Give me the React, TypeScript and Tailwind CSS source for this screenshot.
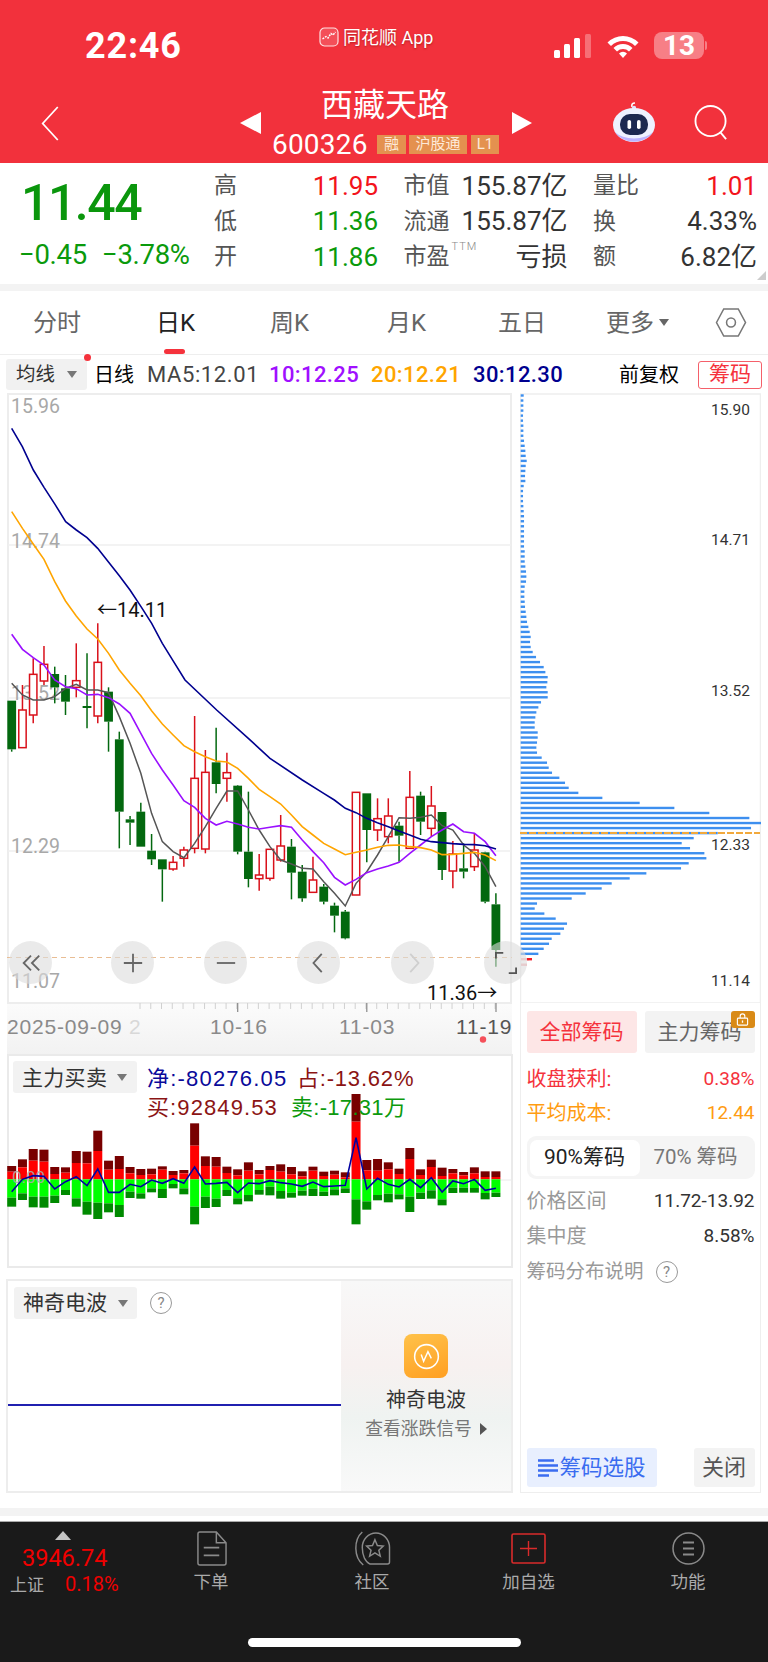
import React from "react";

// Horizontal slot of each trading day shared by the candle, MA and money-flow plots.
const slotX = (i: number) => 11.7 + i * 10.76;
const py = (v: number) => 680 + v / 3;

// [open-close top, open-close bottom, high, low, rising]
const candles: [number, number, number, number, boolean][] = [
  [62, 208, 62, 215, false], [90, 203, 15, 203, true], [-17, 105, -65, 130, true], [-47, 3, -102, 15, true],
  [-18, 22, -40, 70, false], [25, 65, -15, 105, false], [2, 22, -110, 52, true], [78, 84, -80, 145, false],
  [-53, 108, -170, 130, true], [35, 125, 22, 215, false], [178, 395, 155, 505, false], [418, 428, 408, 495, false],
  [395, 500, 368, 500, false], [512, 538, 462, 555, false], [538, 568, 538, 665, false], [547, 567, 528, 572, true],
  [510, 535, 500, 560, true], [295, 505, 108, 520, true], [277, 507, 210, 520, true], [247, 312, 143, 340, false],
  [278, 295, 218, 365, true], [317, 515, 315, 523, false], [515, 597, 335, 622, false], [585, 596, 522, 632, true],
  [508, 595, 508, 602, true], [498, 540, 405, 545, true], [500, 578, 477, 658, false], [575, 655, 555, 665, false],
  [600, 637, 530, 637, true], [620, 665, 612, 673, false], [677, 707, 668, 757, false], [695, 775, 690, 778, false],
  [337, 645, 337, 645, true], [340, 450, 340, 547, false], [416, 450, 355, 483, true], [408, 470, 355, 490, true],
  [437, 467, 425, 545, false], [352, 505, 273, 505, true], [347, 425, 335, 465, false], [378, 445, 318, 470, true],
  [396, 570, 396, 600, false], [522, 573, 483, 625, true], [565, 575, 490, 595, false], [510, 560, 460, 573, true],
  [517, 665, 515, 670, false], [673, 810, 640, 860, false],
];

const ma5 = [10, 45, 60, 60, 50, 25, 13, 30, 30, 38, 110, 190, 280, 400, 485, 515, 533, 490, 440, 385, 333, 333, 390, 450, 500, 540, 552, 565, 567, 605, 640, 678, 610, 575, 525, 470, 413, 415, 412, 405, 437, 450, 495, 520, 560, 620];
const ma10 = [-137, -92, -67, -45, 0, 20, 26, 45, 43, 53, 72, 100, 160, 220, 270, 315, 362, 382, 415, 435, 424, 432, 442, 447, 442, 437, 442, 480, 515, 548, 592, 615, 598, 578, 567, 558, 547, 520, 495, 470, 450, 432, 455, 460, 485, 527];
const ma20 = [-505, -455, -408, -362, -295, -237, -192, -153, -123, -80, -30, 10, 47, 92, 132, 165, 197, 215, 230, 243, 246, 265, 295, 328, 350, 372, 405, 440, 465, 490, 507, 524, 517, 510, 502, 496, 495, 500, 503, 510, 524, 523, 520, 517, 525, 542];
const ma30: [number, number][] = [
  [35, -755], [67, -700], [100, -630], [132, -578], [165, -527], [197, -475], [229, -450], [261, -427], [293, -395],
  [326, -353], [358, -313], [390, -270], [423, -220], [455, -170], [487, -110], [519, -58], [555, 0], [650, 90],
  [745, 175], [810, 235], [907, 300], [971, 340], [1003, 360], [1036, 385], [1068, 398], [1100, 415], [1132, 428],
  [1165, 440], [1197, 453], [1229, 465], [1262, 478], [1294, 485], [1326, 488], [1358, 491], [1391, 493], [1423, 494],
  [1455, 497], [1488, 507],
];

const line = (vals: number[]) => vals.map((v, i) => `${slotX(i)},${py(v)}`).join(" ");

// Chip distribution: right end of each price level's bar (in thirds of a pixel), top to bottom.
const chipEnds = [
  38, 37, 37, 37, 36, 36, 37, 37, 37, 39, 41, 43, 44, 47, 44, 43, 42, 43, 38, 36, 36, 36, 37, 38, 39, 39, 39, 39, 39, 39,
  39, 41, 41, 41, 43, 45, 46, 45, 41, 40, 40, 41, 42, 44, 46, 48, 52, 56, 59, 57, 59, 65, 75, 87, 98, 103, 110, 109, 106,
  110, 110, 90, 82, 76, 73, 71, 71, 80, 80, 78, 76, 78, 92, 108, 113, 123, 145, 162, 173, 202, 274, 386, 490, 595, 715,
  750, 720, 620, 548, 512, 537, 580, 586, 533, 510, 406, 356, 302, 272, 224, 182, 78, 71, 100, 134, 168, 159, 148, 122,
  114, 98, 82,
];

// [dark top, red top, green bottom, dark bottom]
const flows: [number, number, number, number][] = [
  [378, 395, 473, 500], [358, 382, 460, 480], [327, 362, 470, 502], [329, 365, 470, 503], [381, 402, 467, 489],
  [382, 398, 450, 465], [333, 369, 475, 500], [335, 370, 485, 524], [272, 333, 488, 537], [362, 389, 490, 517],
  [348, 387, 495, 531], [381, 400, 455, 474], [387, 405, 460, 476], [386, 403, 445, 457], [379, 389, 447, 474],
  [393, 405, 432, 445], [390, 400, 445, 463], [250, 317, 500, 553], [349, 378, 470, 504], [351, 380, 476, 501],
  [380, 399, 450, 468], [388, 406, 475, 493], [367, 392, 465, 484], [390, 403, 450, 464], [378, 390, 440, 466],
  [373, 395, 453, 476], [381, 403, 458, 473], [394, 409, 452, 467], [380, 392, 446, 468], [395, 408, 455, 468],
  [392, 404, 448, 466], [397, 412, 445, 459], [162, 245, 478, 553], [360, 391, 484, 509], [357, 392, 465, 481],
  [367, 388, 461, 487], [386, 402, 463, 478], [324, 357, 470, 516], [388, 405, 458, 477], [359, 381, 451, 476],
  [383, 408, 478, 496], [387, 400, 443, 459], [396, 406, 443, 458], [382, 400, 444, 458], [394, 411, 459, 478],
  [394, 411, 458, 471],
];
const flowNet = [455, 418, 407, 409, 447, 425, 410, 437, 387, 457, 457, 433, 440, 420, 430, 416, 430, 381, 432, 430, 427, 458, 429, 431, 422, 428, 432, 439, 426, 440, 438, 436, 293, 447, 415, 433, 441, 418, 443, 413, 456, 423, 431, 418, 451, 445];
const fy = (v: number) => 1040 + v / 3;

function Tri({ dir, className, color }: { dir: "d" | "l" | "r" | "u"; className: string; color: string }) {
  const pts = { d: "0,0 10,0 5,10", u: "5,0 10,10 0,10", l: "10,0 10,10 0,5", r: "0,0 10,5 0,10" }[dir];
  return (
    <svg viewBox="0 0 10 10" preserveAspectRatio="none" className={className}>
      <polygon points={pts} fill={color} />
    </svg>
  );
}

function Help({ className }: { className: string }) {
  return (
    <span className={`flex items-center justify-center rounded-full border-[1.5px] border-[#999] text-[#888] text-[15px] leading-none ${className}`}>?</span>
  );
}

function StockTag({ children, className }: { children: React.ReactNode; className: string }) {
  return (
    <span className={`h-[19px] flex items-center justify-center bg-[#e4914f] text-[#fde9d8] text-[15px] leading-none ${className}`}>{children}</span>
  );
}

function StatusBar() {
  return (
    <div className="h-[80px] flex items-center text-white pt-[11px]">
      <span className="ml-[85px] w-[234px] text-[36px] font-bold tracking-[0.8px] leading-none">22:46</span>
      <div className="w-[234px] flex items-center -mt-[16px] [text-shadow:0_1px_2px_rgba(120,0,0,0.5)]">
        <svg viewBox="0 0 20 20" className="w-[20px] h-[20px] -mt-[2px]">
          <rect x="1" y="1" width="18" height="18" rx="4.5" fill="#fff" fillOpacity="0.15" stroke="#fde2e2" strokeWidth="1.2" />
          <path d="M3.5 12 L7 9.5 L9 11 L12 6.5 L14 8 L16.5 5" fill="none" stroke="#fff" strokeWidth="1.4" strokeDasharray="2 1" />
        </svg>
        <span className="ml-[4px] text-[18px] leading-none">同花顺 App</span>
      </div>
      <svg viewBox="0 0 40 24" className="w-[40px] h-[24px]">
        <rect x="1" y="16" width="6" height="8" rx="1.5" fill="#fff" />
        <rect x="11" y="10" width="6" height="14" rx="1.5" fill="#fff" />
        <rect x="21" y="4" width="6" height="20" rx="1.5" fill="#fff" />
        <rect x="32" y="0" width="6" height="24" rx="1.5" fill="#fff" fillOpacity="0.3" />
      </svg>
      <svg viewBox="0 0 34 24" className="ml-[13px] w-[34px] h-[24px]">
        <path d="M1.5 8.5 A22 22 0 0 1 32.5 8.5 L29 12 A17 17 0 0 0 5 12 Z" fill="#fff" />
        <path d="M7.5 14 A13.5 13.5 0 0 1 26.5 14 L23 17.5 A8.5 8.5 0 0 0 11 17.5 Z" fill="#fff" />
        <path d="M13 19.5 A5.5 5.5 0 0 1 21 19.5 L17 24 Z" fill="#fff" />
      </svg>
      <div className="ml-[14px] w-[50px] h-[27px] rounded-[8px] bg-[#f77f86] flex items-center justify-center text-[28px] font-bold leading-none">13</div>
      <span className="ml-[1px] w-[2px] h-[9px] rounded-r-full bg-[#f77f86]" />
    </div>
  );
}

function StockNav() {
  return (
    <div className="flex-1 flex text-white">
      <svg viewBox="0 0 18 36" className="ml-[41px] mt-[26px] w-[18px] h-[35px]">
        <path d="M17 1 L1.5 18 L17 35" fill="none" stroke="#fff" strokeWidth="1.8" />
      </svg>
      <Tri dir="l" color="#fff" className="ml-[181px] mt-[32px] w-[21px] h-[22px]" />
      <div className="ml-[11px] w-[228px] flex flex-col">
        <span className="ml-[49px] mt-[8px] text-[32px] leading-[34px]">西藏天路</span>
        <div className="flex items-center mt-[13px] h-[19px]">
          <span className="text-[28px] leading-none tracking-[0.2px] w-[105px]">600326</span>
          <StockTag className="w-[29px]">融</StockTag>
          <StockTag className="ml-[3px] w-[58px]">沪股通</StockTag>
          <StockTag className="ml-[4px] w-[28px]">L1</StockTag>
        </div>
      </div>
      <Tri dir="r" color="#fff" className="ml-[12px] mt-[32px] w-[20px] h-[22px]" />
      <svg viewBox="0 0 44 40" className="ml-[80px] mt-[22px] w-[44px] h-[40px]">
        <path d="M20 5 Q19 1 23 1" fill="none" stroke="#fff" strokeWidth="1.6" />
        <circle cx="22" cy="6" r="2.2" fill="#dfe6ff" />
        <ellipse cx="22" cy="23" rx="21" ry="17" fill="#eef1ff" />
        <path d="M3 30 A21 17 0 0 0 41 30 A22 13 0 0 1 3 30" fill="#bcb3ff" />
        <rect x="8" y="12" width="28" height="21" rx="10" fill="#1c2850" />
        <rect x="15.5" y="18" width="3.6" height="9" rx="1.8" fill="#fff" />
        <rect x="25" y="18" width="3.6" height="9" rx="1.8" fill="#fff" />
      </svg>
      <svg viewBox="0 0 36 36" className="ml-[38px] mt-[25px] w-[35px] h-[35px]">
        <circle cx="17" cy="16.5" r="15.5" fill="none" stroke="#fff" strokeWidth="1.9" />
        <path d="M27 28 L33 35" stroke="#fff" strokeWidth="1.9" />
      </svg>
    </div>
  );
}

function QuoteCell({ label, value, valueClass = "text-[#333]" }: { label: string; value: string; valueClass?: string }) {
  return (
    <div className="flex items-center justify-between">
      <span className="text-[23px] text-[#555] leading-none">{label}</span>
      <span className={`text-[26px] leading-none ${valueClass}`}>{value}</span>
    </div>
  );
}

function QuotePanel() {
  const up = "text-[#f3131c]";
  const down = "text-[#0a9a0c]";
  return (
    <div className="h-[120px] flex bg-white relative">
      <div className="w-[214px] shrink-0 flex flex-col">
        <span className="ml-[21px] mt-[12px] text-[50px] font-medium leading-[54px] text-[#0a960c] tracking-[-1.5px]">11.44</span>
        <div className="flex mt-[11px] ml-[19px] text-[27.5px] leading-none text-[#0a9a0c] tracking-[-0.3px]">
          <span className="w-[83px]">−0.45</span>
          <span>−3.78%</span>
        </div>
      </div>
      <div className="grid grid-cols-[164px_164px_164px] gap-x-[25.5px] grid-rows-[35.5px_35.5px_35.5px] mt-[4px]">
        <QuoteCell label="高" value="11.95" valueClass={up} />
        <QuoteCell label="市值" value="155.87亿" />
        <QuoteCell label="量比" value="1.01" valueClass={up} />
        <QuoteCell label="低" value="11.36" valueClass={down} />
        <QuoteCell label="流通" value="155.87亿" />
        <QuoteCell label="换" value="4.33%" />
        <QuoteCell label="开" value="11.86" valueClass={down} />
        <div className="flex items-center justify-between">
          <span className="text-[23px] text-[#555] leading-none flex">
            市盈
            <span className="text-[11px] text-[#888] font-light tracking-[1px] -mt-[4px] ml-[2px]">TTM</span>
          </span>
          <span className="text-[26px] text-[#333] leading-none">亏损</span>
        </div>
        <QuoteCell label="额" value="6.82亿" />
      </div>
      <svg viewBox="0 0 10 10" className="absolute right-[2px] bottom-[4px] w-[9px] h-[9px]">
        <polygon points="10,0 10,10 0,10" fill="#ccc" />
      </svg>
    </div>
  );
}

function PeriodTabs() {
  const tabs = [
    ["分时", "ml-[33px] w-[123px] text-[#666]"],
    ["日K", "w-[114px] text-[#222]"],
    ["周K", "w-[117px] text-[#666]"],
    ["月K", "w-[111px] text-[#666]"],
    ["五日", "w-[108px] text-[#666]"],
  ];
  return (
    <div className="h-[64px] flex items-center relative border-b-[1px] border-[#eee]">
      {tabs.map(([t, c]) => (
        <span key={t} className={`text-[24px] leading-none ${c}`}>{t}</span>
      ))}
      <span className="text-[24px] leading-none text-[#666]">更多</span>
      <Tri dir="d" color="#666" className="ml-[5px] w-[10px] h-[7px]" />
      <svg viewBox="0 0 32 30" className="ml-[46px] w-[32px] h-[29px]">
        <polygon points="1,15 8.5,1 23.5,1 31,15 23.5,29 8.5,29" fill="none" stroke="#777" strokeWidth="1.6" />
        <circle cx="16" cy="15" r="4.6" fill="none" stroke="#777" strokeWidth="1.6" />
      </svg>
      <span className="absolute left-[164px] bottom-0 w-[21px] h-[5px] rounded-full bg-[#f5323c]" />
    </div>
  );
}

function MaLegend() {
  return (
    <div className="h-[37px] flex items-center relative text-[20px] leading-none pt-[2px]">
      <div className="ml-[6px] w-[81px] h-[31px] rounded-[3px] bg-[#f1f1f1] flex items-center text-[#333] text-[19.5px]">
        <span className="ml-[10px] w-[51px]">均线</span>
        <Tri dir="d" color="#777" className="w-[10px] h-[7px]" />
      </div>
      <span className="ml-[7px] w-[53px] text-black">日线</span>
      <span className="w-[122px] text-[#444] text-[22px] tracking-[0.6px]">MA5:12.01</span>
      <span className="w-[102px] text-[#a010ff] text-[22px] font-medium tracking-[0.4px]">10:12.25</span>
      <span className="w-[102px] text-[#ffa500] text-[22px] font-medium tracking-[0.4px]">20:12.21</span>
      <span className="w-[146px] text-[#00008f] text-[22px] font-medium tracking-[0.4px]">30:12.30</span>
      <span className="w-[79px] text-black">前复权</span>
      <span className="w-[64px] h-[28px] rounded-[3px] border-[1px] border-[#f5606a] text-[#f5323c] text-[21px] flex items-center justify-center">筹码</span>
      <span className="absolute left-[84px] -top-[1px] w-[7px] h-[7px] rounded-full bg-[#f5323c]" />
    </div>
  );
}

function CandlePlot() {
  const grey = "#a8a8a8";
  return (
    <svg viewBox="7 392 505 662" className="w-[505px] h-[662px] block">
      <rect x="8" y="394" width="503" height="609" fill="#fff" stroke="#ededed" strokeWidth="2" />
      {[545, 698, 851].map((y) => (
        <line key={y} x1="8" x2="511" y1={y} y2={y} stroke="#efefef" strokeWidth="1.5" />
      ))}
      <g fill={grey} fontSize="19.5">
        <text x="11" y="413">15.96</text>
        <text x="11" y="548">14.74</text>
        <text x="11" y="700">13.52</text>
        <text x="11" y="853">12.29</text>
        <text x="11" y="988">11.07</text>
      </g>
      {candles.map(([t, b, h, l, r], i) => {
        const x = slotX(i);
        const c = r ? "#d9101a" : "#03680f";
        return (
          <g key={i}>
            <line x1={x} x2={x} y1={py(h)} y2={py(t)} stroke={c} strokeWidth="1.5" />
            <line x1={x} x2={x} y1={py(b)} y2={py(l)} stroke={c} strokeWidth="1.5" />
            {r ? (
              <rect x={x - 3.7} y={py(t)} width="7.4" height={py(b) - py(t)} fill="#fff" stroke={c} strokeWidth="1.5" />
            ) : (
              <rect x={x - 4.4} y={py(t)} width="8.8" height={Math.max(py(b) - py(t), 2)} fill={c} />
            )}
          </g>
        );
      })}
      <polyline points={line(ma5)} fill="none" stroke="#555" strokeWidth="1.5" />
      <polyline points={line(ma10)} fill="none" stroke="#9a10ff" strokeWidth="1.6" />
      <polyline points={line(ma20)} fill="none" stroke="#ffa500" strokeWidth="1.6" />
      <polyline points={ma30.map(([x, y]) => `${x / 3},${py(y)}`).join(" ")} fill="none" stroke="#00008f" strokeWidth="1.6" />
      <line x1="7" x2="512" y1="957.5" y2="957.5" stroke="#e9bd93" strokeWidth="1" strokeDasharray="5 4" />
      <g fill="#111" fontSize="20">
        <text x="97" y="617">←14.11</text>
        <text x="427" y="999.5">11.36→</text>
      </g>
      <defs>
        <linearGradient id="axisShade" x1="0" x2="0" y1="0" y2="1">
          <stop offset="0" stopColor="#fbfbfb" />
          <stop offset="1" stopColor="#f2f2f2" />
        </linearGradient>
      </defs>
      <rect x="7" y="1004" width="505" height="50" fill="url(#axisShade)" />
      {Array.from({ length: 34 }, (_, k) => {
        const x = 140 + k * 10.76;
        return <line key={k} x1={x} x2={x} y1="1003" y2="1009" stroke="#d0d0d0" strokeWidth="1" />;
      })}
      {[237.7, 366.8, 496].map((x) => (
        <line key={x} x1={x} x2={x} y1="1003" y2="1012" stroke="#888" strokeWidth="1.2" />
      ))}
      <g fontSize="21" fill="#8a8a8a" fontFamily="'Liberation Sans', sans-serif">
        <text x="7" y="1034" letterSpacing="0.8">2025-09-09</text>
        <text x="129" y="1034" fill="#d8d8d8">2</text>
        <text x="210" y="1034" letterSpacing="0.8">10-16</text>
        <text x="339" y="1034" letterSpacing="0.8">11-03</text>
        <text x="456" y="1034" letterSpacing="0.8" fill="#555">11-19</text>
      </g>
      <circle cx="483" cy="1039.5" r="3.2" fill="#f5505a" />
    </svg>
  );
}

function ChartControls() {
  const stroke = "#666";
  const items = [
    { left: "left-[2px]", path: "M12 4 L4 12 L12 20 M21 4 L13 12 L21 20", c: stroke },
    { left: "left-[104px]", path: "M2 12 L22 12 M12 2 L12 22", c: stroke },
    { left: "left-[197px]", path: "M2 12 L22 12", c: stroke },
    { left: "left-[290px]", path: "M15 2 L6 12 L15 22", c: stroke },
    { left: "left-[384px]", path: "M9 2 L18 12 L9 22", c: "#cfcfcf" },
    { left: "left-[477px]", path: "M1 7 L1 1 L9 1 M23 17 L23 23 L15 23", c: "#555" },
  ];
  return (
    <>
      {items.map((it) => (
        <div key={it.left} className={`absolute top-[549px] ${it.left} w-[43px] h-[43px] rounded-full bg-[#dcdcdc]/60 flex items-center justify-center`}>
          <svg viewBox="0 0 24 24" className="w-[22px] h-[22px]">
            <path d={it.path} fill="none" stroke={it.c} strokeWidth="2" />
          </svg>
        </div>
      ))}
    </>
  );
}

function ChipPlot() {
  const rows = chipEnds.map((w, i) => ({ w: (w - 29) / 3, y: 395.3 + i * 5.03 }));
  return (
    <svg viewBox="520 392 241 611" className="w-[241px] h-[611px] block">
      <rect x="520.5" y="394" width="240" height="609" fill="#fff" stroke="#eee" strokeWidth="1.5" />
      {rows.map((r, i) => (
        <rect key={i} x="520.7" y={r.y - 1} width={Math.max(r.w, 2)} height="2.4" fill="#3d8fef" />
      ))}
      <rect x="521" y="958" width="8" height="2.4" fill="#f4b3b6" />
      <rect x="527" y="958" width="5" height="2.4" fill="#f01c28" />
      <rect x="521" y="963.5" width="6" height="2.4" fill="#f4b3b6" />
      <line x1="520" x2="760" y1="833" y2="833" stroke="#f2a93c" strokeWidth="2" strokeDasharray="7 2" />
      <g fill="#333" fontSize="15.5" textAnchor="end">
        <text x="750" y="415">15.90</text>
        <text x="750" y="545">14.71</text>
        <text x="750" y="696">13.52</text>
        <text x="750" y="850">12.33</text>
        <text x="750" y="986">11.14</text>
      </g>
    </svg>
  );
}

function SmallDropdown({ label, className }: { label: string; className: string }) {
  return (
    <div className={`h-[32px] rounded-[3px] bg-[#f2f2f2] flex items-center text-[#333] text-[21px] leading-none ${className}`}>
      <span className="ml-[9px] w-[95px]">{label}</span>
      <Tri dir="d" color="#777" className="w-[10px] h-[7px]" />
    </div>
  );
}

function FlowPanel() {
  return (
    <div className="w-[506px] h-[214px] border-[2px] border-[#eaeaea] relative bg-white">
      <svg viewBox="7 1054 506 214" className="absolute -left-[2px] -top-[2px] w-[506px] h-[214px]">
        <line x1="7" x2="512" y1="1180" y2="1180" stroke="#eaeaea" />
        {flows.map(([dt, rt, gb, db], i) => {
          const x = slotX(i) - 4.5;
          const base = fy(418);
          return (
            <g key={i}>
              <rect x={x} y={fy(dt)} width="9" height={fy(rt) - fy(dt)} fill="#780000" />
              <rect x={x} y={fy(rt)} width="9" height={base - fy(rt)} fill="#ff0000" />
              <rect x={x} y={base} width="9" height={fy(gb) - base} fill="#00ff00" />
              <rect x={x} y={fy(gb)} width="9" height={fy(db) - fy(gb)} fill="#008a00" />
            </g>
          );
        })}
        <text x="12" y="1183" fontSize="17" fill="#aaa" fillOpacity="0.9">0.00</text>
        <polyline points={flowNet.map((v, i) => `${slotX(i)},${fy(v)}`).join(" ")} fill="none" stroke="#0000a0" strokeWidth="1.6" />
      </svg>
      <div className="relative flex pt-[5px] pl-[4px] font-['Liberation_Sans','Noto_Sans_CJK_SC',sans-serif]">
        <SmallDropdown label="主力买卖" className="w-[124px] tracking-[0.3px]" />
        <div className="ml-[10px] flex flex-col text-[22px] leading-[29px] tracking-[0.8px]">
          <div className="flex mt-[3px]">
            <span className="w-[150px] text-[#0a0a9a] tracking-[1.2px]">净:-80276.05</span>
            <span className="text-[#8b1414]">占:-13.62%</span>
          </div>
          <div className="flex">
            <span className="w-[144px] text-[#8b1414] tracking-[1.1px]">买:92849.53</span>
            <span className="text-[#0d9a0d] tracking-[0.3px]">卖:-17.31万</span>
          </div>
        </div>
      </div>
    </div>
  );
}

function WavePanel() {
  return (
    <div className="mt-[11px] w-[507px] h-[214px] border-[2px] border-[#ededed] flex -ml-[1px]">
      <div className="w-[333px] flex flex-col bg-white">
        <div className="flex items-center pt-[6px] pl-[6px]">
          <SmallDropdown label="神奇电波" className="w-[123px]" />
          <Help className="ml-[13px] w-[22px] h-[22px]" />
        </div>
        <div className="mt-[85px] h-[2px] bg-[#2020b0]" />
      </div>
      <div className="flex-1 flex flex-col items-center bg-[linear-gradient(180deg,#f8f8f8_0%,#f7f1f0_40%,#eff3f1_65%,#f9f9f9_100%)]">
        <div className="mt-[53px] w-[44px] h-[44px] rounded-[8px] bg-[linear-gradient(160deg,#ffc24a,#ff9f22)] flex items-center justify-center">
          <svg viewBox="0 0 28 28" className="w-[27px] h-[27px]">
            <circle cx="14" cy="14" r="12.3" fill="none" stroke="#fff" strokeWidth="1.6" />
            <path d="M8.5 12 L11 19 L15.5 9 L19 16" fill="none" stroke="#fff" strokeWidth="1.5" />
          </svg>
        </div>
        <span className="mt-[10px] text-[20px] leading-[24px] text-[#333]">神奇电波</span>
        <div className="mt-[6px] flex items-center text-[17.8px] leading-[22px] text-[#777]">
          <span>查看涨跌信号</span>
          <Tri dir="r" color="#555" className="ml-[8px] w-[7px] h-[12px]" />
        </div>
      </div>
    </div>
  );
}

function ChipDetails() {
  return (
    <div className="w-[241px] h-[490px] border-x-[1.5px] border-b-[1.5px] border-[#eee] flex flex-col px-[5.5px] text-[20px] leading-none bg-white">
      <div className="flex justify-between mt-[8px]">
        <span className="w-[110px] h-[42px] rounded-[3px] bg-[#fde6e6] text-[#f5323c] text-[21px] flex items-center justify-center">全部筹码</span>
        <span className="w-[110px] h-[42px] rounded-[3px] bg-[#f3f3f3] text-[#666] text-[21px] flex items-center justify-center relative">
          主力筹码
          <span className="absolute right-0 top-0 w-[24px] h-[17px] rounded-[3px] bg-[#d98a16] flex items-center justify-center">
            <svg viewBox="0 0 14 14" className="w-[13px] h-[13px]">
              <rect x="1.5" y="5.5" width="11" height="7.5" rx="1" fill="none" stroke="#fff" strokeWidth="1.2" />
              <path d="M4.5 5.5 V3.5 A2.5 2.5 0 0 1 9.5 3.5 V5.5" fill="none" stroke="#fff" strokeWidth="1.2" />
              <rect x="6.3" y="8" width="1.4" height="2.5" fill="#fff" />
            </svg>
          </span>
        </span>
      </div>
      <div className="flex justify-between mt-[16px] text-[#f5323c]"><span>收盘获利:</span><span className="text-[19px]">0.38%</span></div>
      <div className="flex justify-between mt-[14px] text-[#ff9c12]"><span>平均成本:</span><span className="text-[19px]">12.44</span></div>
      <div className="mt-[13px] h-[43px] rounded-[9px] bg-[#f5f5f5] flex items-center px-[3px]">
        <span className="w-[110px] h-[36px] rounded-[7px] bg-white text-[#222] text-[21px] flex items-center justify-center">90%筹码</span>
        <span className="flex-1 text-[#777] text-[20.5px] text-center">70% 筹码</span>
      </div>
      <div className="flex justify-between mt-[12px] text-[#999]"><span>价格区间</span><span className="text-[19px] text-[#333]">11.72-13.92</span></div>
      <div className="flex justify-between mt-[15px] text-[#999]"><span>集中度</span><span className="text-[19px] text-[#333]">8.58%</span></div>
      <div className="flex items-center mt-[15px] text-[#999] text-[19.5px]">
        <span>筹码分布说明</span>
        <Help className="ml-[12px] w-[22px] h-[22px]" />
      </div>
      <div className="mt-auto mb-[5px] flex justify-between">
        <div className="w-[130px] h-[39px] rounded-[3px] bg-[#e8effe] flex items-center">
          <svg viewBox="0 0 21 18" className="ml-[11px] w-[21px] h-[18px]">
            <path d="M0 1.5 H16 M0 6.5 H20 M0 11.5 H20 M0 16.5 H11" stroke="#3a6cf0" strokeWidth="2.6" />
          </svg>
          <span className="ml-[1px] text-[21.5px] text-[#3a6cf0]">筹码选股</span>
        </div>
        <div className="w-[61px] h-[39px] rounded-[3px] bg-[#f3f3f3] text-[22px] text-[#555] flex items-center justify-center">关闭</div>
      </div>
    </div>
  );
}

function NavItem({ label, icon, className }: { label: string; icon: React.ReactNode; className: string }) {
  return (
    <div className={`flex flex-col items-center ${className}`}>
      <div className="h-[38px] flex items-center justify-center">{icon}</div>
      <span className="mt-[4px] text-[17.5px] leading-[22px] text-[#aaa]">{label}</span>
    </div>
  );
}

function BottomBar() {
  const s = "#8a8a8a";
  return (
    <div className="h-[140px] bg-[#1a1a1a] flex flex-col">
      <div className="flex pt-[7px]">
        <div className="w-[124px] flex flex-col relative">
          <Tri dir="u" color="#c4c4c4" className="ml-[55px] mt-[2px] w-[16px] h-[9px]" />
          <span className="ml-[22px] mt-[5px] text-[23.5px] leading-[27px] text-[#f00000]">3946.74</span>
          <div className="flex items-baseline mt-[1px] ml-[10px]">
            <span className="w-[55px] text-[17px] leading-[22px] text-[#aaa]">上证</span>
            <span className="text-[20px] leading-[22px] text-[#f00000]">0.18%</span>
          </div>
        </div>
        <NavItem
          label="下单"
          className="ml-[61px] w-[52px]"
          icon={
            <svg viewBox="0 0 32 36" className="w-[31px] h-[35px]">
              <path d="M2 3 A2 2 0 0 1 4 1 H21 L31 12 V33 A2 2 0 0 1 29 35 H4 A2 2 0 0 1 2 33 Z M21 1 V12 H31" fill="none" stroke={s} strokeWidth="1.5" />
              <path d="M8 17 H24 M8 25 H24" stroke={s} strokeWidth="1.8" />
            </svg>
          }
        />
        <NavItem
          label="社区"
          className="ml-[109px] w-[52px]"
          icon={
            <svg viewBox="0 0 37 36" className="w-[37px] h-[35px]">
              <path d="M8 1 C-1 9 -1 27 9 35" fill="none" stroke={s} strokeWidth="1.5" />
              <path d="M8 17 A14 15 0 0 1 36 17 V32 A2 2 0 0 1 34 34 H16 C11 32 8 25 8 17 Z" fill="none" stroke={s} strokeWidth="1.5" />
              <polygon points="21,9 23.5,15 29.5,15.5 25,19.7 26.5,26 21,22.5 15.5,26 17,19.7 12.5,15.5 18.5,15" fill="none" stroke={s} strokeWidth="1.5" />
            </svg>
          }
        />
        <NavItem
          label="加自选"
          className="ml-[99.5px] w-[62px]"
          icon={
            <svg viewBox="0 0 35 31" className="w-[35px] h-[31px]">
              <rect x="1" y="1" width="33" height="29" rx="1.5" fill="none" stroke="#d92b2b" strokeWidth="1.6" />
              <path d="M9 15.5 H26 M17.5 8 V23" stroke="#d92b2b" strokeWidth="1.4" />
            </svg>
          }
        />
        <NavItem
          label="功能"
          className="ml-[102.5px] w-[52px]"
          icon={
            <svg viewBox="0 0 33 33" className="w-[33px] h-[33px]">
              <circle cx="16.5" cy="16.5" r="15.5" fill="none" stroke={s} strokeWidth="1.5" />
              <path d="M11 10.5 H22 M11 16.5 H22 M11 22.5 H22" stroke={s} strokeWidth="2" />
            </svg>
          }
        />
      </div>
      <div className="mt-auto mb-[15px] ml-[248px] w-[273px] h-[9px] rounded-full bg-white" />
    </div>
  );
}

export default function App() {
  return (
    <div className="w-[768px] h-[1662px] overflow-hidden bg-white flex flex-col font-['Roboto','Noto_Sans_CJK_SC',sans-serif]">
      <div className="h-[163px] bg-[#f2313c] flex flex-col shrink-0">
        <StatusBar />
        <StockNav />
      </div>
      <div className="h-[1px] bg-white" />
      <QuotePanel />
      <div className="h-[7px] bg-[#f3f3f3]" />
      <PeriodTabs />
      <MaLegend />
      <div className="flex h-[1101px]">
        <div className="ml-[7px] w-[505px] flex flex-col relative">
          <CandlePlot />
          <FlowPanel />
          <WavePanel />
          <ChartControls />
        </div>
        <div className="ml-[8px] flex flex-col">
          <ChipPlot />
          <ChipDetails />
        </div>
      </div>
      <div className="h-[15px] bg-white" />
      <div className="h-[8px] bg-[#f3f3f3]" />
      <div className="h-[6px] bg-white border-b-[1px] border-[#aaa]" />
      <BottomBar />
    </div>
  );
}
